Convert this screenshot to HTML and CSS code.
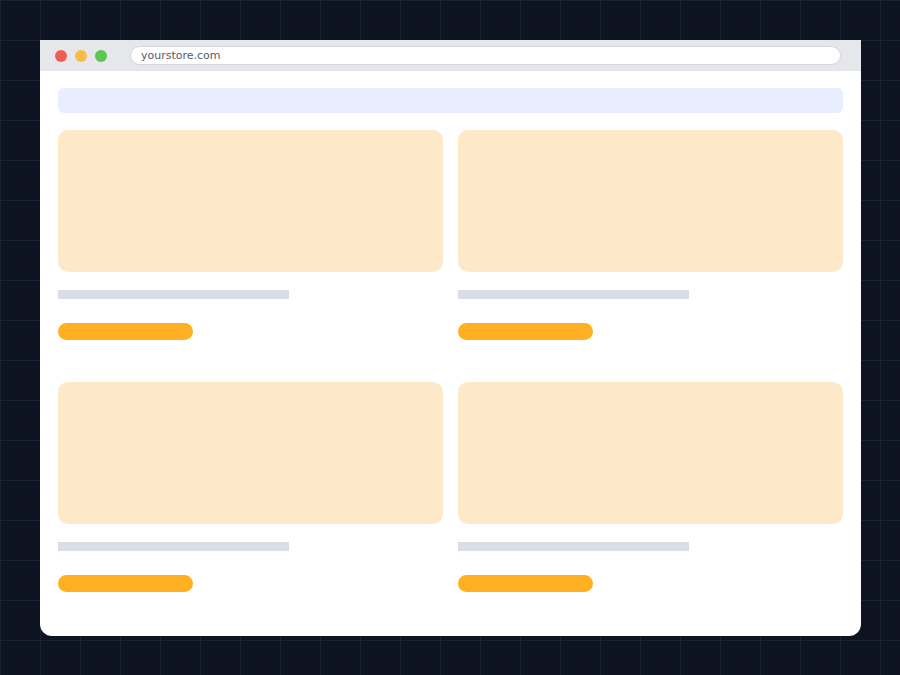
FILE: index.html
```html
<!DOCTYPE html>
<html>
<head>
<meta charset="utf-8">
<link rel="stylesheet" href="styles.css">
</head>
<body>
<div class="window">
  <div class="titlebar">
    <span class="dot red"></span>
    <span class="dot yellow"></span>
    <span class="dot green"></span>
    <div class="url">yourstore.com</div>
  </div>
  <div class="content">
    <div class="banner"></div>
    <div class="grid">
      <div class="card"><div class="image"></div><div class="line"></div><div class="pill"></div></div>
      <div class="card"><div class="image"></div><div class="line"></div><div class="pill"></div></div>
      <div class="card"><div class="image"></div><div class="line"></div><div class="pill"></div></div>
      <div class="card"><div class="image"></div><div class="line"></div><div class="pill"></div></div>
    </div>
  </div>
</div>
</body>
</html>
```
FILE: styles.css
```css
html, body {
  margin: 0;
  padding: 0;
}
body {
  width: 900px;
  height: 675px;
  overflow: hidden;
  background-color: #0d1320;
  background-image:
    linear-gradient(to right, #1a2130 1px, transparent 1px),
    linear-gradient(to bottom, #1a2130 1px, transparent 1px);
  background-size: 40px 40px;
  font-family: "DejaVu Sans", Verdana, sans-serif;
  padding-top: 40px;
  padding-left: 40px;
  box-sizing: border-box;
}
.window {
  width: 821px;
  height: 596px;
  background: #ffffff;
  border-radius: 0 0 12px 12px;
  overflow: hidden;
}
.titlebar {
  height: 31px;
  background: #e5e7eb;
  display: flex;
  align-items: center;
  padding-left: 15px;
  padding-right: 20px;
  box-sizing: border-box;
}
.dot {
  width: 12px;
  height: 12px;
  border-radius: 50%;
  margin-right: 8px;
  flex: none;
}
.red { background: #ec5f55; }
.yellow { background: #f8bc4b; }
.green { background: #5ec454; }
.url {
  margin-left: 15px;
  flex: 1;
  height: 19px;
  background: #ffffff;
  border: 1px solid #d3d6dd;
  border-radius: 10px;
  box-sizing: border-box;
  font-size: 11px;
  line-height: 17px;
  color: #555d6b;
  padding-left: 10px;
  margin-top: -1px;
}
.content {
  padding: 17px 18px 0 18px;
}
.banner {
  height: 25px;
  background: #e8eefe;
  border-radius: 6px;
  margin-bottom: 17px;
}
.grid {
  display: grid;
  grid-template-columns: 1fr 1fr;
  column-gap: 15px;
  row-gap: 42px;
}
.card {
  display: flex;
  flex-direction: column;
}
.image {
  height: 142px;
  background: #fde8c8;
  border-radius: 10px;
}
.line {
  margin-top: 18px;
  width: 231px;
  height: 9px;
  background: #d9dde6;
}
.pill {
  margin-top: 24px;
  width: 135px;
  height: 17px;
  background: #ffaf20;
  border-radius: 9px;
}
```
